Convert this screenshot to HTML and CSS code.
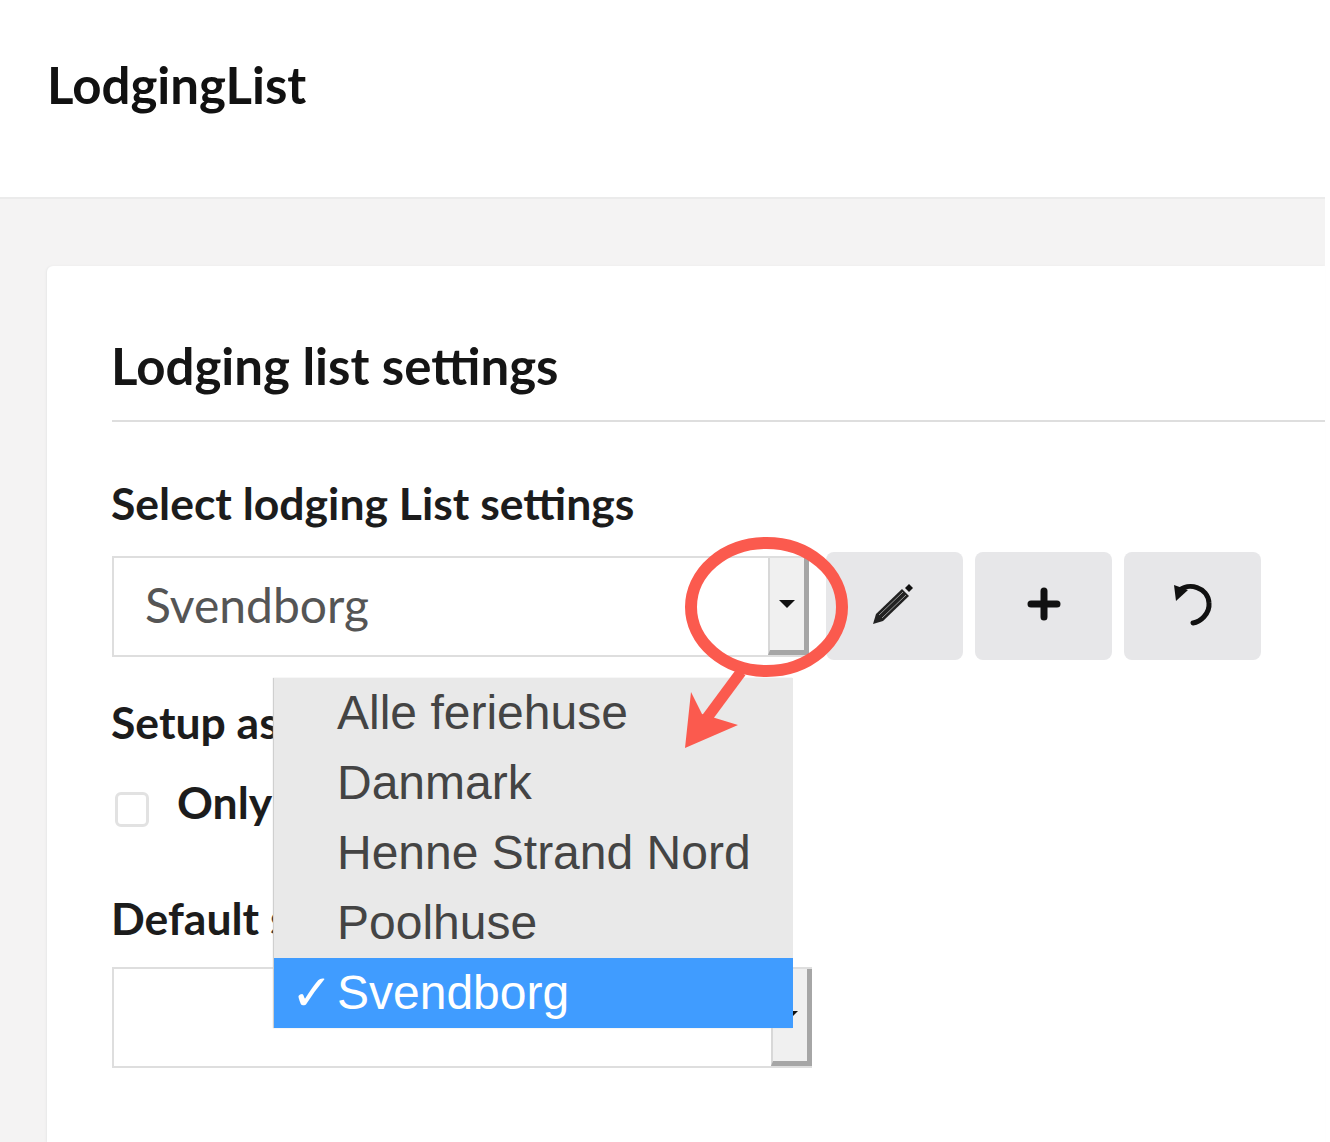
FILE: index.html
```html
<!DOCTYPE html>
<html lang="en">
<head>
    <meta charset="UTF-8">
    <title>LodgingList</title>
    <link rel="stylesheet" href="styles.css">
</head>
<body>
    <div class="page">
        <div class="header">
            <h1>LodgingList</h1>
        </div>
        <div class="main">
            <div class="card">
                <h2>Lodging list settings</h2>

                <label class="field-label first">Select lodging List settings</label>
                <div class="select-row">
                    <div class="select">
                        <span class="select-value">Svendborg</span>
                        <span class="select-btn"><i class="caret"></i></span>
                    </div>
                    <div class="icon-btn">
                        <svg width="44" height="44" viewBox="0 0 44 44">
                            <path d="M2 42 L5 32 L31 7 L38 14 L12 39 Z" fill="#222"/>
                            <path d="M8 33 L32 10 M11 36 L35 13" stroke="#999" stroke-width="1"/>
                            <path d="M38 2 L42 6 L38 10 L34 6 Z" fill="#111"/>
                        </svg>
                    </div>
                    <div class="icon-btn">
                        <svg width="36" height="36" viewBox="0 0 36 36">
                            <path d="M18 5 V31 M5 18 H31" stroke="#111" stroke-width="7" stroke-linecap="round"/>
                        </svg>
                    </div>
                    <div class="icon-btn">
                        <svg width="46" height="46" viewBox="0 0 46 46">
                            <path d="M9 10 C18 1 38 6 39 22 C40 33 30 41 23 42" fill="none" stroke="#111" stroke-width="5" stroke-linecap="round"/>
                            <path d="M4 4 L18 9 L6 20 Z" fill="#111"/>
                        </svg>
                    </div>
                </div>

                <label class="field-label setup">Setup as</label>
                <div class="check-row">
                    <span class="checkbox"></span>
                    <span class="check-text">Only</span>
                </div>

                <label class="field-label default">Default s</label>
                <div class="select second">
                    <span class="select-value"></span>
                    <span class="select-btn"><i class="caret"></i></span>
                </div>
            </div>
        </div>

        <div class="menu">
            <div class="menu-item">Alle feriehuse</div>
            <div class="menu-item">Danmark</div>
            <div class="menu-item">Henne Strand Nord</div>
            <div class="menu-item">Poolhuse</div>
            <div class="menu-item active"><span class="tick">✓</span>Svendborg</div>
        </div>

        <svg class="callout" width="1330" height="1142" viewBox="0 0 1330 1142">
            <ellipse cx="766.5" cy="607" rx="75.5" ry="64" fill="none" stroke="#fb5a4e" stroke-width="12"/>
            <path d="M741 672 L704 722" stroke="#fb5a4e" stroke-width="11" fill="none"/>
            <path d="M685 748 L691 692 L702 714 L738 725 Z" fill="#fb5a4e"/>
        </svg>
    </div>
</body>
</html>
```

FILE: styles.css
```css
html, body {
    height: 100%;
    margin: 0;
    background-color: white;
    font-family: "Lato", sans-serif;
}

body {
    overflow: hidden;
}

.page {
    width: 1325px;
    height: 1142px;
    display: flex;
    flex-direction: column;
}

.header {
    height: 197px;
    padding-left: 47px;
    display: flex;
    align-items: center;
    background-color: white;
    border-bottom: 2px solid #ebebeb;
    flex-shrink: 0;
}

.header h1 {
    margin: 0 0 28px 0;
    font-size: 51px;
    font-weight: 700;
    color: #111;
}

.main {
    flex-grow: 1;
    display: flex;
    padding: 67px 0 0 47px;
    background-color: #f4f3f3;
    min-height: 0;
}

.card {
    flex-grow: 1;
    padding: 0 0 0 65px;
    background-color: white;
    border-top-left-radius: 6px;
    box-shadow: -1px 0 2px #e8e8e8;
}

.card h2 {
    margin: 0;
    padding: 71px 0 25px 0;
    font-size: 51px;
    line-height: 58px;
    font-weight: 700;
    color: #151515;
    border-bottom: 2px solid #dedede;
    text-indent: -1px;
}

.field-label {
    display: block;
    font-size: 44.5px;
    line-height: 52px;
    font-weight: 700;
    color: #1c1c1c;
    text-indent: -1px;
}

.field-label.first {
    margin-top: 55px;
}

.field-label.setup {
    margin-top: 36px;
}

.field-label.default {
    margin-top: 65px;
}

.select-row {
    display: flex;
    align-items: center;
    margin-top: 23px;
    height: 108px;
}

.select {
    box-sizing: border-box;
    width: 697px;
    height: 101px;
    display: flex;
    justify-content: space-between;
    background-color: white;
    border: 2px solid #dedede;
    border-right: 0;
    flex-shrink: 0;
}

.select.second {
    width: 700px;
    margin-top: 23px;
}

.select-value {
    padding-left: 31px;
    font-size: 48px;
    line-height: 93px;
    color: #555;
}

.select-btn {
    box-sizing: border-box;
    width: 41px;
    display: flex;
    align-items: center;
    justify-content: center;
    background-color: #f0f0f0;
    border-left: 2px solid #d8d8d8;
    border-right: 5px solid #a6a6a6;
    border-bottom: 5px solid #a6a6a6;
}

.caret {
    width: 0;
    height: 0;
    border-left: 8px solid transparent;
    border-right: 8px solid transparent;
    border-top: 8px solid #111;
}

.icon-btn {
    box-sizing: border-box;
    width: 137px;
    height: 108px;
    margin-left: 12px;
    padding-bottom: 4px;
    display: flex;
    align-items: center;
    justify-content: center;
    background-color: #e7e7e9;
    border-radius: 8px;
}

.select-row .select + .icon-btn {
    margin-left: 17px;
    padding-right: 4px;
}

.check-row {
    display: flex;
    align-items: center;
    margin-top: 27px;
    height: 52px;
}

.checkbox {
    box-sizing: border-box;
    width: 34px;
    height: 35px;
    margin: 17px 0 0 3px;
    background-color: white;
    border: 3px solid #e2e2e2;
    border-radius: 6px;
}

.check-text {
    margin-left: 28px;
    font-size: 44.5px;
    font-weight: 700;
    color: #1c1c1c;
}

/* native popup list over the form */
.menu {
    position: absolute;
    left: 274px;
    top: 678px;
    width: 519px;
    background-color: #e9e9e9;
    font-family: "Liberation Sans", Arial, sans-serif;
    font-size: 48px;
    color: #444;
    box-shadow: -1px 0 1px #cfcfcf;
}

.menu-item {
    position: relative;
    height: 70px;
    line-height: 70px;
    padding-left: 63px;
}

.menu-item.active {
    background-color: #409cff;
    color: white;
}

.tick {
    position: absolute;
    left: 17px;
    top: 0;
    font-family: "DejaVu Sans", sans-serif;
    font-size: 50px;
    font-weight: 700;
}

.callout {
    position: absolute;
    left: 0;
    top: 0;
    pointer-events: none;
}
```
